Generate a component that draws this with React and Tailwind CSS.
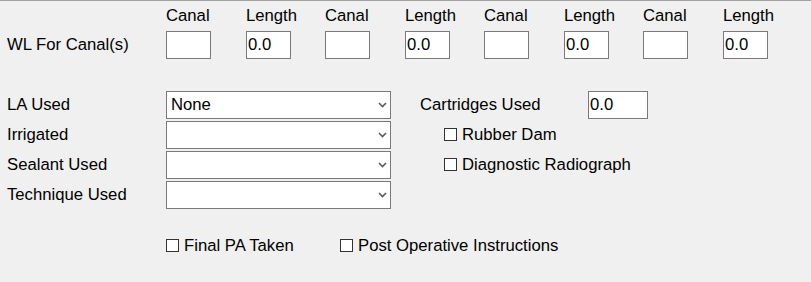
import React from "react";

const pairs = [0, 1, 2, 3];

function TextBox({ value = "", className = "" }) {
  return (
    <div className={`h-[28px] border border-[#7a7a7a] bg-white flex items-center pl-[1px] text-[16.7px] text-black ${className}`}>
      {value}
    </div>
  );
}

function Combo({ value = "" }) {
  return (
    <div className="w-[225px] h-[28px] border border-[#7a7a7a] bg-white flex items-center justify-between pl-[4px] pr-[4px]">
      <span className="text-[16.7px] text-black">{value}</span>
      <svg width="9" height="6" viewBox="0 0 9 6" className="mr-[-1px]">
        <polyline points="1,1 4.5,4.5 8,1" fill="none" stroke="#5a5a5a" strokeWidth="1.6" />
      </svg>
    </div>
  );
}

function Check({ label }) {
  return (
    <div className="flex items-center gap-[5px]">
      <div className="w-[13px] h-[13px] border border-[#333333] bg-white" />
      <span className="text-[16.7px] text-black">{label}</span>
    </div>
  );
}

export default function App() {
  const left = [
    { label: "LA Used", value: "None" },
    { label: "Irrigated", value: "" },
    { label: "Sealant Used", value: "" },
    { label: "Technique Used", value: "" },
  ];

  return (
    <div
      className="w-[811px] h-[282px] bg-[#f0f0f0] border-t border-[#a0a0a0] text-black overflow-hidden text-[16.7px]"
      style={{ fontFamily: '"Liberation Sans", Arial, sans-serif' }}
    >
      {/* header labels */}
      <div className="flex pl-[166px] mt-[5px] h-[19px] leading-[19px]">
        {pairs.map((i) => (
          <React.Fragment key={i}>
            <div className="w-[80px]">Canal</div>
            <div className="w-[79px]">Length</div>
          </React.Fragment>
        ))}
      </div>

      {/* WL row */}
      <div className="flex items-center pl-[7px] mt-[6px] h-[28px]">
        <div className="w-[159px]">WL For Canal(s)</div>
        {pairs.map((i) => (
          <React.Fragment key={i}>
            <div className="w-[80px]">
              <TextBox className="w-[45px]" />
            </div>
            <div className="w-[79px]">
              <TextBox className="w-[45px]" value="0.0" />
            </div>
          </React.Fragment>
        ))}
      </div>

      {/* combos + right column */}
      <div className="flex pl-[7px] mt-[32px]">
        <div className="flex flex-col gap-[2px]">
          {left.map((r) => (
            <div key={r.label} className="flex items-center h-[28px]">
              <div className="w-[159px]">{r.label}</div>
              <Combo value={r.value} />
            </div>
          ))}
        </div>
        <div className="flex flex-col gap-[2px] ml-[29px]">
          <div className="flex items-center h-[28px]">
            <div className="w-[168px]">Cartridges Used</div>
            <TextBox className="w-[60px]" value="0.0" />
          </div>
          <div className="flex items-center h-[28px] pl-[24px]">
            <Check label="Rubber Dam" />
          </div>
          <div className="flex items-center h-[28px] pl-[24px]">
            <Check label="Diagnostic Radiograph" />
          </div>
        </div>
      </div>

      {/* bottom checks */}
      <div className="flex items-center h-[28px] mt-[23px] pl-[166px]">
        <div className="w-[174px]">
          <Check label="Final PA Taken" />
        </div>
        <Check label="Post Operative Instructions" />
      </div>
    </div>
  );
}
